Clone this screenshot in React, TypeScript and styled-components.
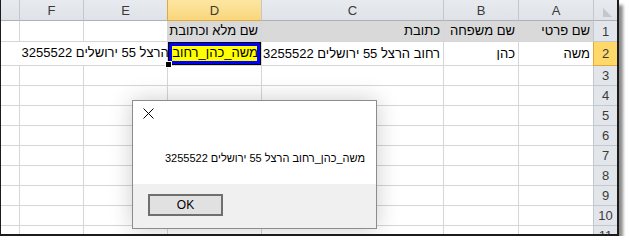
import styled, { createGlobalStyle } from "styled-components";

const GlobalStyle = createGlobalStyle`
  body {
    margin: 0;
    background: #fff;
    font-family: "Liberation Sans", Arial, sans-serif;
  }
`;

const LETTERS = ["A", "B", "C", "D", "E", "F", ""];
const ACTIVE_COL = 3;
const ACTIVE_ROW = 2;
const FULL = "משה_כהן_רחוב הרצל 55 ירושלים 3255522";

const rows: string[][] = [
  ["שם פרטי", "שם משפחה", "כתובת", "שם מלא וכתובת", "", "", ""],
  ["משה", "כהן", "רחוב הרצל 55 ירושלים 3255522", FULL, "", "", ""],
];

const Frame = styled.div`
  position: relative;
  width: 619px;
  height: 236px;
  box-sizing: border-box;
  border-left: 1px solid #1c1c1c;
  border-right: 2px solid #1c1c1c;
  border-bottom: 2px solid #1c1c1c;
  box-shadow: 4px 5px 3px rgba(0, 0, 0, 0.45);
  overflow: hidden;
  background: #fff;
`;

const Sheet = styled.div`
  direction: rtl;
  display: grid;
  grid-template-columns: 24px 75px 75px 182px 94px 84px 64px 18px;
  grid-template-rows: 21px 21px 24px repeat(9, 20px);
  font-size: 13px;
  color: #000;
`;

const ColHead = styled.div<{ $active?: boolean; $last?: boolean }>`
  box-sizing: border-box;
  display: flex;
  align-items: center;
  justify-content: center;
  border-left: ${(p) => (p.$last ? "none" : `1px solid ${p.$active ? "#e2a73f" : "#c3c8ce"}`)};
  border-bottom: 1px solid ${(p) => (p.$active ? "#e2a73f" : "#abb2ba")};
  background: ${(p) =>
    p.$active ? "linear-gradient(#fde6a2, #f9d67b)" : "linear-gradient(#e7eaee, #dfe3e8)"};
  color: #3a3a3a;
  font-size: 13px;
  padding-top: 1px;
`;

const Corner = styled(ColHead)`
  align-items: flex-end;
  justify-content: flex-start;
  padding: 0 5px 3px 0;
`;

const RowHead = styled.div<{ $active?: boolean }>`
  box-sizing: border-box;
  display: flex;
  align-items: center;
  justify-content: center;
  border-left: 1px solid ${(p) => (p.$active ? "#e2a73f" : "#c3c8ce")};
  border-bottom: 1px solid ${(p) => (p.$active ? "#e2a73f" : "#c3c8ce")};
  background: ${(p) => (p.$active ? "#ffd86a" : "#e2e6eb")};
  color: #3a3a3a;
  font-size: 13px;
`;

const Cell = styled.div<{ $fill?: string; $noLine?: boolean }>`
  position: relative;
  box-sizing: border-box;
  display: flex;
  align-items: center;
  padding: 0 3px 1px;
  white-space: nowrap;
  border-left: ${(p) => (p.$noLine ? "none" : "1px solid #d6d6d6")};
  border-bottom: 1px solid #d6d6d6;
  background: ${(p) => p.$fill || "transparent"};
`;

const ActiveCell = styled(Cell)`
  background: #ffff00;
  box-shadow: inset 0 0 0 1px #000, inset 0 0 0 4px #0000ff;
  padding: 0 3px 3px;
  z-index: 1;
`;

const FillHandle = styled.span`
  position: absolute;
  left: -3px;
  bottom: -3px;
  width: 5px;
  height: 5px;
  background: #000;
  border: 1px solid #fff;
`;

const Dialog = styled.div`
  position: absolute;
  left: 131px;
  top: 100px;
  width: 245px;
  height: 129px;
  box-sizing: border-box;
  display: flex;
  flex-direction: column;
  border: 1px solid #8c8c8c;
  background: #fff;
  box-shadow: 0 0 22px rgba(0, 0, 0, 0.2);
  z-index: 2;
`;

const DialogBody = styled.div`
  height: 83px;
  display: flex;
  flex-direction: column;
  padding: 7px 11px 0 10px;
  box-sizing: border-box;
`;

const CloseButton = styled.svg`
  display: block;
`;

const Message = styled.div`
  direction: rtl;
  text-align: right;
  margin-top: 31px;
  font-size: 11px;
  line-height: 16px;
  color: #000;
  white-space: nowrap;
`;

const DialogFooter = styled.div`
  flex: 1;
  background: #f0f0f0;
  display: flex;
  align-items: flex-start;
  padding: 10px 0 0 15px;
`;

const OkButton = styled.button`
  width: 75px;
  height: 22px;
  box-sizing: border-box;
  border: 2px solid #6f6f6f;
  background: #e1e1e1;
  font-family: "Liberation Sans", Arial, sans-serif;
  font-size: 12px;
  color: #000;
  padding: 0;
`;

export default function App() {
  return (
    <>
      <GlobalStyle />
      <Frame>
        <Sheet>
          <Corner>
            <svg width="9" height="9" viewBox="0 0 9 9">
              <polygon points="0,0 0,9 9,9" fill="#c4c8cd" />
            </svg>
          </Corner>
          {LETTERS.map((l, i) => (
            <ColHead key={l + i} $active={i === ACTIVE_COL} $last={i === LETTERS.length - 1}>
              {l}
            </ColHead>
          ))}
          {Array.from({ length: 11 }, (_, r) => {
            const n = r + 1;
            const data = rows[r] || [];
            return [
              <RowHead key={`h${n}`} $active={n === ACTIVE_ROW}>
                {n}
              </RowHead>,
              ...LETTERS.map((_, c) => {
                const key = `${n}-${c}`;
                if (n === ACTIVE_ROW && c === ACTIVE_COL) {
                  return (
                    <ActiveCell key={key}>
                      {data[c]}
                      <FillHandle />
                    </ActiveCell>
                  );
                }
                const spill = n === ACTIVE_ROW && (c === 4 || c === 5);
                return (
                  <Cell
                    key={key}
                    $fill={n === 1 && c <= 3 ? "#d9d9d9" : undefined}
                    $noLine={spill || c === LETTERS.length - 1}
                  >
                    {data[c]}
                  </Cell>
                );
              }),
            ];
          })}
        </Sheet>
        <Dialog>
          <DialogBody>
            <CloseButton width="11" height="11" viewBox="0 0 11 11">
              <path d="M0.5 0.5 L10.5 10.5 M10.5 0.5 L0.5 10.5" stroke="#000" strokeWidth="1" />
            </CloseButton>
            <Message>{FULL}</Message>
          </DialogBody>
          <DialogFooter>
            <OkButton>OK</OkButton>
          </DialogFooter>
        </Dialog>
      </Frame>
    </>
  );
}
